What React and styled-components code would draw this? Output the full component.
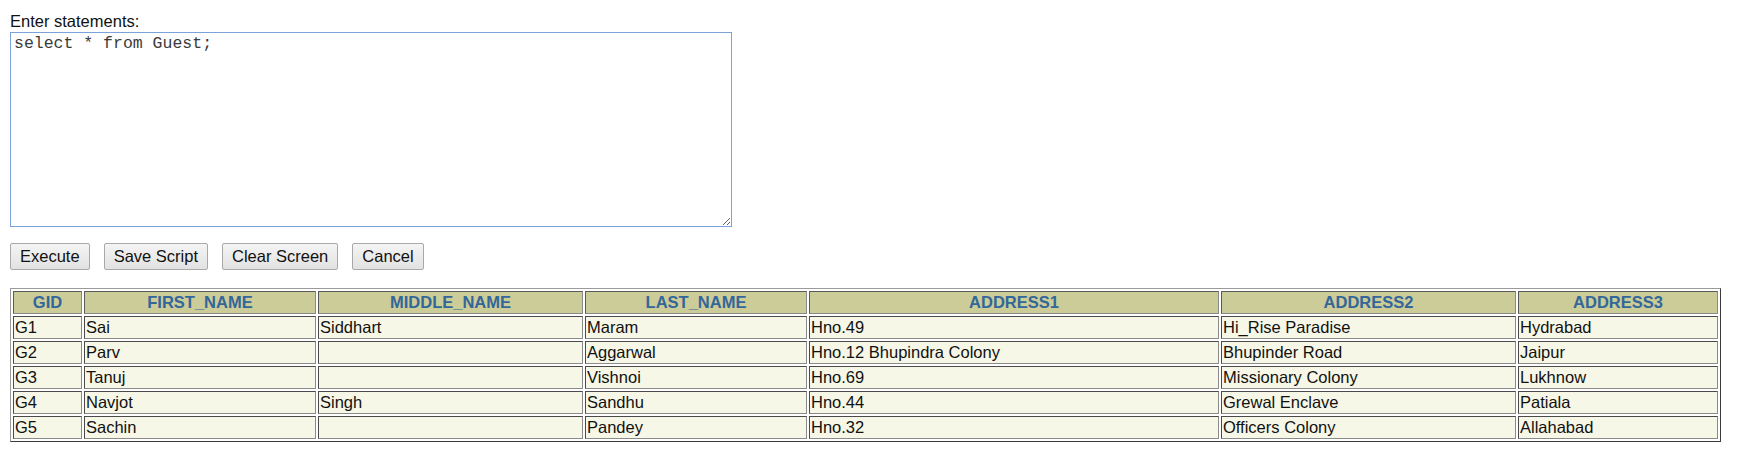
import React from 'react';
import styled, { createGlobalStyle } from 'styled-components';

const Global = createGlobalStyle`
  html, body {
    margin: 0;
    padding: 0;
    background: #ffffff;
  }
  body {
    padding: 12px 10px 0 10px;
    font-family: "Liberation Sans", Arial, sans-serif;
    font-size: 16.5px;
    color: #111;
  }
`;

const Label = styled.div`
  line-height: 18px;
  height: 18px;
`;

const Editor = styled.textarea`
  display: block;
  box-sizing: border-box;
  margin-top: 2px;
  width: 722px;
  height: 195px;
  border: 1px solid #7ba3d9;
  padding: 2px 3px;
  font-family: "Liberation Mono", "Courier New", monospace;
  font-size: 16.5px;
  line-height: 18px;
  color: #3a3a3a;
  background: #fff;
  outline: none;
`;

const Toolbar = styled.div`
  display: flex;
  gap: 14px;
  margin-top: 16px;
`;

const Button = styled.button`
  box-sizing: border-box;
  height: 27px;
  padding: 0 9px;
  font-family: "Liberation Sans", Arial, sans-serif;
  font-size: 16.5px;
  color: #111;
  background: linear-gradient(#f4f4f4, #e2e2e2);
  border: 1px solid #a9a9a9;
  border-radius: 2px;
`;

const Grid = styled.table`
  box-sizing: border-box;
  margin-top: 18px;
  width: 1711px;
  table-layout: fixed;
  border-collapse: separate;
  border-spacing: 2px;
  border: 1px solid;
  border-color: #9a9a9a #3c3c3c #3c3c3c #9a9a9a;
`;

const Th = styled.th`
  box-sizing: border-box;
  width: ${p => p.$w}px;
  height: 23px;
  padding: 0 1px;
  background: #cccc99;
  color: #336699;
  font-weight: bold;
  font-size: 16.5px;
  line-height: 19px;
  text-align: center;
  border: 1px solid;
  border-color: #5a5a5a #8a8a8a #8a8a8a #5a5a5a;
`;

const Td = styled.td`
  box-sizing: border-box;
  height: 23px;
  padding: 0 1px;
  background: #f7f7e7;
  color: #111;
  font-size: 16.5px;
  line-height: 19px;
  white-space: nowrap;
  overflow: hidden;
  border: 1px solid;
  border-color: #4a4a4a #8a8a8a #8a8a8a #4a4a4a;
`;

const columns = [
  ['GID', 69],
  ['FIRST_NAME', 232],
  ['MIDDLE_NAME', 265],
  ['LAST_NAME', 222],
  ['ADDRESS1', 410],
  ['ADDRESS2', 295],
  ['ADDRESS3', 200],
];

const guests = [
  ['G1', 'Sai', 'Siddhart', 'Maram', 'Hno.49', 'Hi_Rise Paradise', 'Hydrabad'],
  ['G2', 'Parv', '', 'Aggarwal', 'Hno.12 Bhupindra Colony', 'Bhupinder Road', 'Jaipur'],
  ['G3', 'Tanuj', '', 'Vishnoi', 'Hno.69', 'Missionary Colony', 'Lukhnow'],
  ['G4', 'Navjot', 'Singh', 'Sandhu', 'Hno.44', 'Grewal Enclave', 'Patiala'],
  ['G5', 'Sachin', '', 'Pandey', 'Hno.32', 'Officers Colony', 'Allahabad'],
];

export default function App() {
  return (
    <>
      <Global />
      <Label>Enter statements:</Label>
      <Editor defaultValue="select * from Guest;" spellCheck={false} />
      <Toolbar>
        <Button>Execute</Button>
        <Button>Save Script</Button>
        <Button>Clear Screen</Button>
        <Button>Cancel</Button>
      </Toolbar>
      <Grid>
        <thead>
          <tr>
            {columns.map(([name, w]) => (
              <Th key={name} $w={w}>{name}</Th>
            ))}
          </tr>
        </thead>
        <tbody>
          {guests.map(row => (
            <tr key={row[0]}>
              {row.map((val, i) => (
                <Td key={i}>{val}</Td>
              ))}
            </tr>
          ))}
        </tbody>
      </Grid>
    </>
  );
}
